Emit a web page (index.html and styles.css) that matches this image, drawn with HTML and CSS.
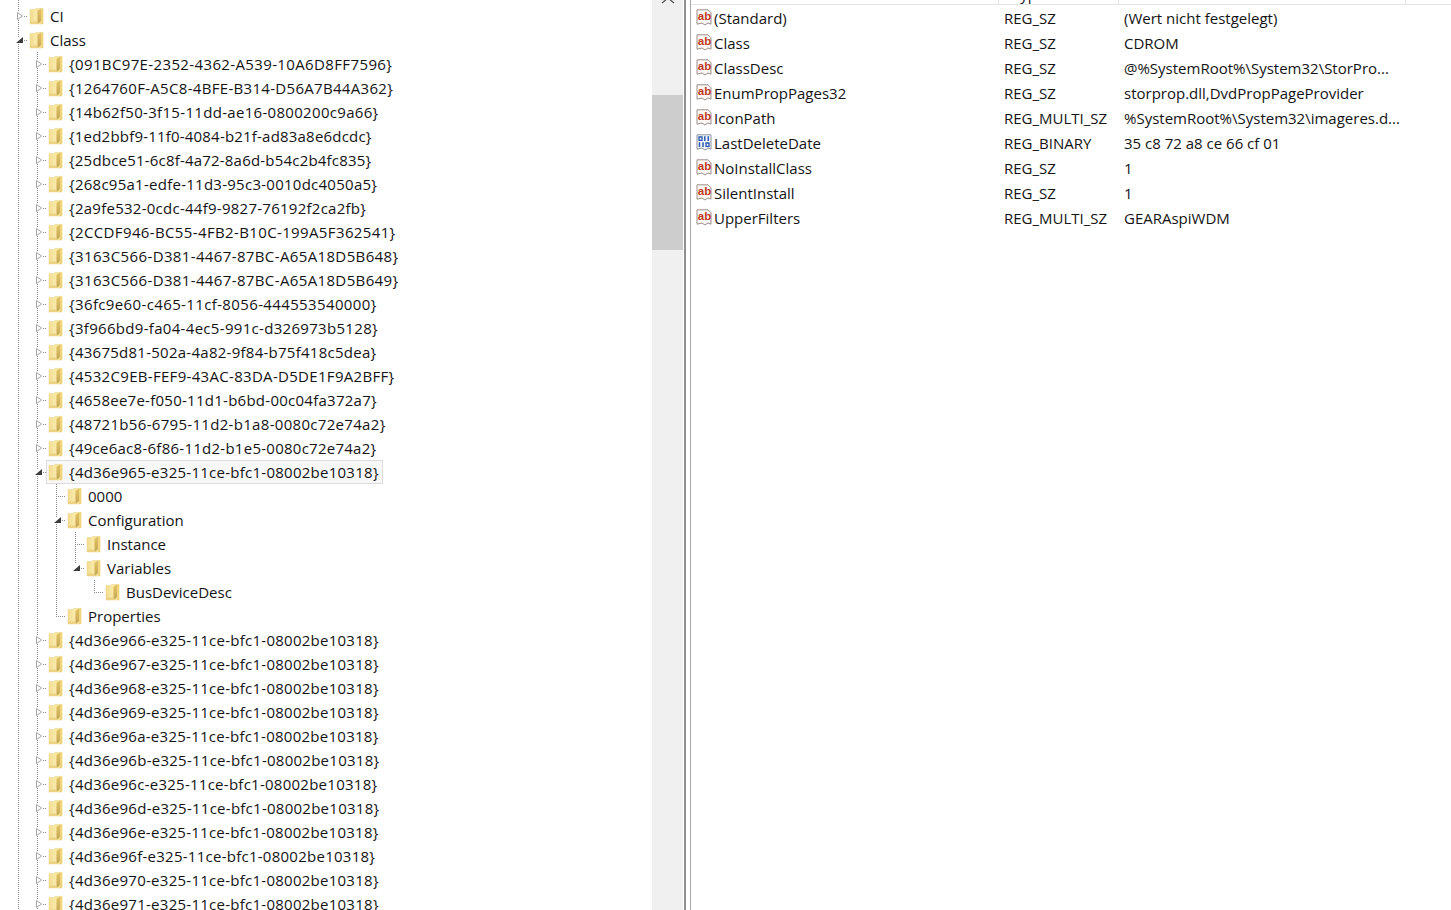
FILE: index.html
```html
<!DOCTYPE html>
<html lang="de">
<head>
<meta charset="utf-8">
<title>Registrierungs-Editor</title>
<link rel="stylesheet" href="styles.css">
</head>
<body>
<svg class="defs" width="0" height="0" aria-hidden="true">
  <defs>
    <linearGradient id="fg" x1="0" y1="0" x2="1" y2="0">
      <stop offset="0" stop-color="#f2dc8e"/><stop offset=".45" stop-color="#f9e9a8"/><stop offset="1" stop-color="#f2d987"/>
    </linearGradient>
    <linearGradient id="fs" x1="0" y1="0" x2="0" y2="1">
      <stop offset="0" stop-color="#e4c265"/><stop offset="1" stop-color="#c4a655"/>
    </linearGradient>
    <symbol id="folder" viewBox="0 0 16 17">
      <path d="M2 1.500h4.500l1-1h7.500v15.500H2z" fill="url(#fg)" stroke="#ecd998" stroke-width=".6"/>
      <path d="M9.500 3l3.500-2.500v12.500l-3.500 3z" fill="url(#fs)"/>
      <path d="M13 .5h2.200v15.500H13z" fill="#f0d57e"/>
      <path d="M2 13.500h7.500v2.500H2z" fill="#ebd383"/>
    </symbol>
    <symbol id="ab" viewBox="0 0 16 17">
      <path d="M1 .8h11l3 3v11.400l-3-1.200-3 2-3-2-5 1.200z" fill="#fdf8f5" stroke="#9c8f8c" stroke-width="1"/>
      <text x="1.800" y="10.500" class="abtext">ab</text>
    </symbol>
    <symbol id="bin" viewBox="0 0 16 17">
      <path d="M1 .8h14v14.400l-3-1.200-3 2-3-2-5 1.200z" fill="#f2f5fb" stroke="#8f939e" stroke-width="1"/>
      <path d="M3 3h3v3.400H3zM10 9h3v3.400h-3z" fill="none" stroke="#2a58ad" stroke-width="1.300"/>
      <path d="M8.800 2.300v4.800M12.300 2.300v4.800M3.500 8.300v4.800M7 8.300v4.800" stroke="#2a58ad" stroke-width="1.500" fill="none"/>
    </symbol>
    <symbol id="closed" viewBox="0 0 6 8"><path d="M.5.500l5 3.500-5 3.500z" fill="#fff" stroke="#a6a6a6"/></symbol>
    <symbol id="opened" viewBox="0 0 7 6"><path d="M0 6L7 0v6z" fill="#3c3c3c"/></symbol>
  </defs>
</svg>

<main class="app">
  <section class="tree">
    <div class="stub"><i class="g"></i></div>
    <div class="row"><i class="x"><svg class="ar"><use href="#closed"/></svg></i><div class="item"><svg class="fo"><use href="#folder"/></svg><span class="lb">CI</span></div></div>
    <div class="row"><i class="x"><svg class="ao"><use href="#opened"/></svg></i><div class="item"><svg class="fo"><use href="#folder"/></svg><span class="lb">Class</span></div></div>
    <div class="row"><i class="g"></i><i class="x"><svg class="ar"><use href="#closed"/></svg></i><div class="item"><svg class="fo"><use href="#folder"/></svg><span class="lb s4">{091BC97E-2352-4362-A539-10A6D8FF7596}</span></div></div>
    <div class="row"><i class="g"></i><i class="x"><svg class="ar"><use href="#closed"/></svg></i><div class="item"><svg class="fo"><use href="#folder"/></svg><span class="lb s3">{1264760F-A5C8-4BFE-B314-D56A7B44A362}</span></div></div>
    <div class="row"><i class="g"></i><i class="x"><svg class="ar"><use href="#closed"/></svg></i><div class="item"><svg class="fo"><use href="#folder"/></svg><span class="lb s3">{14b62f50-3f15-11dd-ae16-0800200c9a66}</span></div></div>
    <div class="row"><i class="g"></i><i class="x"><svg class="ar"><use href="#closed"/></svg></i><div class="item"><svg class="fo"><use href="#folder"/></svg><span class="lb s1">{1ed2bbf9-11f0-4084-b21f-ad83a8e6dcdc}</span></div></div>
    <div class="row"><i class="g"></i><i class="x"><svg class="ar"><use href="#closed"/></svg></i><div class="item"><svg class="fo"><use href="#folder"/></svg><span class="lb s1">{25dbce51-6c8f-4a72-8a6d-b54c2b4fc835}</span></div></div>
    <div class="row"><i class="g"></i><i class="x"><svg class="ar"><use href="#closed"/></svg></i><div class="item"><svg class="fo"><use href="#folder"/></svg><span class="lb s2">{268c95a1-edfe-11d3-95c3-0010dc4050a5}</span></div></div>
    <div class="row"><i class="g"></i><i class="x"><svg class="ar"><use href="#closed"/></svg></i><div class="item"><svg class="fo"><use href="#folder"/></svg><span class="lb s2">{2a9fe532-0cdc-44f9-9827-76192f2ca2fb}</span></div></div>
    <div class="row"><i class="g"></i><i class="x"><svg class="ar"><use href="#closed"/></svg></i><div class="item"><svg class="fo"><use href="#folder"/></svg><span class="lb s4">{2CCDF946-BC55-4FB2-B10C-199A5F362541}</span></div></div>
    <div class="row"><i class="g"></i><i class="x"><svg class="ar"><use href="#closed"/></svg></i><div class="item"><svg class="fo"><use href="#folder"/></svg><span class="lb s4">{3163C566-D381-4467-87BC-A65A18D5B648}</span></div></div>
    <div class="row"><i class="g"></i><i class="x"><svg class="ar"><use href="#closed"/></svg></i><div class="item"><svg class="fo"><use href="#folder"/></svg><span class="lb s4">{3163C566-D381-4467-87BC-A65A18D5B649}</span></div></div>
    <div class="row"><i class="g"></i><i class="x"><svg class="ar"><use href="#closed"/></svg></i><div class="item"><svg class="fo"><use href="#folder"/></svg><span class="lb s4">{36fc9e60-c465-11cf-8056-444553540000}</span></div></div>
    <div class="row"><i class="g"></i><i class="x"><svg class="ar"><use href="#closed"/></svg></i><div class="item"><svg class="fo"><use href="#folder"/></svg><span class="lb s3">{3f966bd9-fa04-4ec5-991c-d326973b5128}</span></div></div>
    <div class="row"><i class="g"></i><i class="x"><svg class="ar"><use href="#closed"/></svg></i><div class="item"><svg class="fo"><use href="#folder"/></svg><span class="lb s2">{43675d81-502a-4a82-9f84-b75f418c5dea}</span></div></div>
    <div class="row"><i class="g"></i><i class="x"><svg class="ar"><use href="#closed"/></svg></i><div class="item"><svg class="fo"><use href="#folder"/></svg><span class="lb s3">{4532C9EB-FEF9-43AC-83DA-D5DE1F9A2BFF}</span></div></div>
    <div class="row"><i class="g"></i><i class="x"><svg class="ar"><use href="#closed"/></svg></i><div class="item"><svg class="fo"><use href="#folder"/></svg><span class="lb s2">{4658ee7e-f050-11d1-b6bd-00c04fa372a7}</span></div></div>
    <div class="row"><i class="g"></i><i class="x"><svg class="ar"><use href="#closed"/></svg></i><div class="item"><svg class="fo"><use href="#folder"/></svg><span class="lb s3">{48721b56-6795-11d2-b1a8-0080c72e74a2}</span></div></div>
    <div class="row"><i class="g"></i><i class="x"><svg class="ar"><use href="#closed"/></svg></i><div class="item"><svg class="fo"><use href="#folder"/></svg><span class="lb s2">{49ce6ac8-6f86-11d2-b1e5-0080c72e74a2}</span></div></div>
    <div class="row"><i class="g"></i><i class="x"><svg class="ao"><use href="#opened"/></svg></i><div class="item sel"><svg class="fo"><use href="#folder"/></svg><span class="lb s2">{4d36e965-e325-11ce-bfc1-08002be10318}</span></div></div>
    <div class="row"><i class="g"></i><i class="g"></i><i class="t"></i><div class="item"><svg class="fo"><use href="#folder"/></svg><span class="lb">0000</span></div></div>
    <div class="row"><i class="g"></i><i class="g"></i><i class="x"><svg class="ao"><use href="#opened"/></svg></i><div class="item"><svg class="fo"><use href="#folder"/></svg><span class="lb">Configuration</span></div></div>
    <div class="row"><i class="g"></i><i class="g"></i><i class="g"></i><i class="t"></i><div class="item"><svg class="fo"><use href="#folder"/></svg><span class="lb">Instance</span></div></div>
    <div class="row"><i class="g"></i><i class="g"></i><i class="g"></i><i class="x end"><svg class="ao"><use href="#opened"/></svg></i><div class="item"><svg class="fo"><use href="#folder"/></svg><span class="lb">Variables</span></div></div>
    <div class="row"><i class="g"></i><i class="g"></i><i class="g"></i><i class="e"></i><i class="l"></i><div class="item"><svg class="fo"><use href="#folder"/></svg><span class="lb">BusDeviceDesc</span></div></div>
    <div class="row"><i class="g"></i><i class="g"></i><i class="l"></i><div class="item"><svg class="fo"><use href="#folder"/></svg><span class="lb">Properties</span></div></div>
    <div class="row"><i class="g"></i><i class="x"><svg class="ar"><use href="#closed"/></svg></i><div class="item"><svg class="fo"><use href="#folder"/></svg><span class="lb s2">{4d36e966-e325-11ce-bfc1-08002be10318}</span></div></div>
    <div class="row"><i class="g"></i><i class="x"><svg class="ar"><use href="#closed"/></svg></i><div class="item"><svg class="fo"><use href="#folder"/></svg><span class="lb s2">{4d36e967-e325-11ce-bfc1-08002be10318}</span></div></div>
    <div class="row"><i class="g"></i><i class="x"><svg class="ar"><use href="#closed"/></svg></i><div class="item"><svg class="fo"><use href="#folder"/></svg><span class="lb s2">{4d36e968-e325-11ce-bfc1-08002be10318}</span></div></div>
    <div class="row"><i class="g"></i><i class="x"><svg class="ar"><use href="#closed"/></svg></i><div class="item"><svg class="fo"><use href="#folder"/></svg><span class="lb s2">{4d36e969-e325-11ce-bfc1-08002be10318}</span></div></div>
    <div class="row"><i class="g"></i><i class="x"><svg class="ar"><use href="#closed"/></svg></i><div class="item"><svg class="fo"><use href="#folder"/></svg><span class="lb s2">{4d36e96a-e325-11ce-bfc1-08002be10318}</span></div></div>
    <div class="row"><i class="g"></i><i class="x"><svg class="ar"><use href="#closed"/></svg></i><div class="item"><svg class="fo"><use href="#folder"/></svg><span class="lb s2">{4d36e96b-e325-11ce-bfc1-08002be10318}</span></div></div>
    <div class="row"><i class="g"></i><i class="x"><svg class="ar"><use href="#closed"/></svg></i><div class="item"><svg class="fo"><use href="#folder"/></svg><span class="lb s2">{4d36e96c-e325-11ce-bfc1-08002be10318}</span></div></div>
    <div class="row"><i class="g"></i><i class="x"><svg class="ar"><use href="#closed"/></svg></i><div class="item"><svg class="fo"><use href="#folder"/></svg><span class="lb s2">{4d36e96d-e325-11ce-bfc1-08002be10318}</span></div></div>
    <div class="row"><i class="g"></i><i class="x"><svg class="ar"><use href="#closed"/></svg></i><div class="item"><svg class="fo"><use href="#folder"/></svg><span class="lb s2">{4d36e96e-e325-11ce-bfc1-08002be10318}</span></div></div>
    <div class="row"><i class="g"></i><i class="x"><svg class="ar"><use href="#closed"/></svg></i><div class="item"><svg class="fo"><use href="#folder"/></svg><span class="lb s2">{4d36e96f-e325-11ce-bfc1-08002be10318}</span></div></div>
    <div class="row"><i class="g"></i><i class="x"><svg class="ar"><use href="#closed"/></svg></i><div class="item"><svg class="fo"><use href="#folder"/></svg><span class="lb s2">{4d36e970-e325-11ce-bfc1-08002be10318}</span></div></div>
    <div class="row"><i class="g"></i><i class="x"><svg class="ar"><use href="#closed"/></svg></i><div class="item"><svg class="fo"><use href="#folder"/></svg><span class="lb s2">{4d36e971-e325-11ce-bfc1-08002be10318}</span></div></div>
  </section>

  <aside class="scroll">
    <svg class="up" viewBox="0 0 14 6"><path d="M1 5l6-5 6 5" fill="none" stroke="#555" stroke-width="1.300"/></svg>
    <div class="thumb"></div>
  </aside>

  <div class="split"></div>

  <section class="list">
    <header class="head">
      <div class="hc hname"></div>
      <div class="hc htype">Typ</div>
      <div class="hc hdata"></div>
      <div class="hc hlast"></div>
    </header>
    <div class="vrow"><div class="name"><svg class="ic"><use href="#ab"/></svg><span>(Standard)</span></div><div class="type">REG_SZ</div><div class="data">(Wert nicht festgelegt)</div></div>
    <div class="vrow"><div class="name"><svg class="ic"><use href="#ab"/></svg><span>Class</span></div><div class="type">REG_SZ</div><div class="data">CDROM</div></div>
    <div class="vrow"><div class="name"><svg class="ic"><use href="#ab"/></svg><span>ClassDesc</span></div><div class="type">REG_SZ</div><div class="data">@%SystemRoot%\System32\StorPro...</div></div>
    <div class="vrow"><div class="name"><svg class="ic"><use href="#ab"/></svg><span>EnumPropPages32</span></div><div class="type">REG_SZ</div><div class="data">storprop.dll,DvdPropPageProvider</div></div>
    <div class="vrow"><div class="name"><svg class="ic"><use href="#ab"/></svg><span>IconPath</span></div><div class="type">REG_MULTI_SZ</div><div class="data">%SystemRoot%\System32\imageres.d...</div></div>
    <div class="vrow"><div class="name"><svg class="ic"><use href="#bin"/></svg><span>LastDeleteDate</span></div><div class="type">REG_BINARY</div><div class="data">35 c8 72 a8 ce 66 cf 01</div></div>
    <div class="vrow"><div class="name"><svg class="ic"><use href="#ab"/></svg><span>NoInstallClass</span></div><div class="type">REG_SZ</div><div class="data">1</div></div>
    <div class="vrow"><div class="name"><svg class="ic"><use href="#ab"/></svg><span>SilentInstall</span></div><div class="type">REG_SZ</div><div class="data">1</div></div>
    <div class="vrow"><div class="name"><svg class="ic"><use href="#ab"/></svg><span>UpperFilters</span></div><div class="type">REG_MULTI_SZ</div><div class="data">GEARAspiWDM</div></div>
  </section>
</main>
</body>
</html>
```
FILE: styles.css
```css
html, body {
  margin: 0;
  height: 100%;
  background: #fff;
  overflow: hidden;
}
body {
  font-family: "Open Sans", "Noto Sans", sans-serif;
  font-size: 15px;
  color: #141414;
}
.defs { position: absolute; }
.abtext {
  font-family: "Liberation Sans", sans-serif;
  font-weight: 700;
  font-size: 11.500px;
  fill: #bd3a26;
}
.app {
  display: flex;
  height: 910px;
  overflow: hidden;
}

/* tree */
.tree {
  width: 652px;
  flex: none;
  padding-left: 9px;
  box-sizing: border-box;
  overflow: hidden;
}
.stub { height: 4px; display: flex; }
.row {
  display: flex;
  height: 24px;
}
.row i, .stub i {
  display: flex;
  align-items: center;
  justify-content: center;
  width: 19px;
  flex: none;
  --dots-v: repeating-linear-gradient(to bottom, #8c8c8c 0 1px, transparent 1px 2px);
  --dots-h: repeating-linear-gradient(to right, #8c8c8c 0 1px, transparent 1px 2px);
}
.g { background: var(--dots-v) 9px 0 / 1px 100% no-repeat; }
.t { background: var(--dots-v) 9px 0 / 1px 100% no-repeat, var(--dots-h) 9px 12px / 10px 1px no-repeat; }
.l { background: var(--dots-v) 9px 0 / 1px 13px no-repeat, var(--dots-h) 9px 12px / 10px 1px no-repeat; }
.x { background: var(--dots-v) 9px 0 / 1px 100% no-repeat, var(--dots-h) 13px 12px / 6px 1px no-repeat; }
.x.end { background: var(--dots-v) 9px 0 / 1px 8px no-repeat, var(--dots-h) 13px 12px / 6px 1px no-repeat; }
.ar {
  width: 6px;
  height: 8px;
  background: #fff;
  margin-left: 2px;
}
.ao {
  width: 7px;
  height: 6px;
  background: #fff;
  margin-left: 1px;
}
.item {
  display: flex;
  align-items: center;
  height: 24px;
  box-sizing: border-box;
  margin-left: -1px;
  padding-right: 3px;
  border: 1px solid transparent;
  white-space: nowrap;
}
.item.sel {
  background: #f8f8f8;
  border-color: #dcdcdc;
}
.fo {
  width: 16px;
  height: 17px;
  flex: none;
}
.lb { margin-left: 6px; }
.s1 { letter-spacing: .2px; }
.s2 { letter-spacing: .26px; }
.s3 { letter-spacing: .31px; }
.s4 { letter-spacing: .37px; }

/* scrollbar */
.scroll {
  width: 31px;
  flex: none;
  background: #f0f0f0;
  display: flex;
  flex-direction: column;
  align-items: center;
}
.up {
  width: 14px;
  height: 6px;
  flex: none;
  margin-top: -2px;
  margin-bottom: 91px;
}
.thumb {
  align-self: stretch;
  height: 155px;
  background: #cdcdcd;
}

.split {
  width: 7px;
  flex: none;
  box-sizing: border-box;
  margin-left: 1px;
  border-left: 2px solid #8f8f8f;
  border-right: 1px solid #a8a8a8;
}

/* values list */
.list {
  flex: 1;
  min-width: 0;
}
.head {
  display: flex;
  height: 5px;
  box-sizing: border-box;
  border-bottom: 1px solid #e5e5e5;
  overflow: hidden;
}
.hc {
  display: flex;
  align-items: flex-end;
  box-sizing: border-box;
  border-right: 1px solid #e5e5e5;
  line-height: 20px;
  flex: none;
}
.hname { width: 308px; }
.htype { width: 120px; padding-left: 13px; }
.hdata { width: 287px; }
.hlast { border-right: 0; flex: 1; }
.vrow {
  display: flex;
  height: 25px;
  align-items: center;
  white-space: nowrap;
}
.name {
  display: flex;
  align-items: center;
  width: 313px;
  box-sizing: border-box;
  padding-left: 5px;
  flex: none;
}
.ic {
  width: 16px;
  height: 17px;
  flex: none;
  margin-right: 2px;
  margin-top: -1px;
}
.type { width: 120px; flex: none; }
.data { flex: 1; }
```
